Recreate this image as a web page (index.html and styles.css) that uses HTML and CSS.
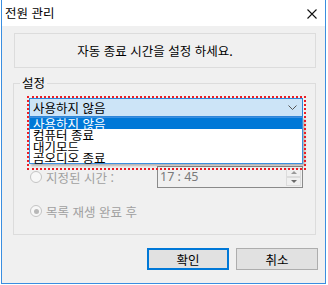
FILE: index.html
```html
<!DOCTYPE html>
<html lang="ko">

<head>
    <meta charset="UTF-8">
    <meta name="viewport" content="width=device-width, initial-scale=1.0">
    <title>전원 관리</title>
    <link rel="stylesheet" href="styles.css">
</head>

<body>

    <div class="window">
        <div class="titlebar">
            <span class="title">전원 관리</span>
            <svg class="close" width="10" height="10" viewBox="0 0 10 10">
                <path d="M0.5 0.5 L9.5 9.5 M9.5 0.5 L0.5 9.5" stroke="#111" stroke-width="1.1" fill="none" />
            </svg>
        </div>

        <div class="content">
            <div class="message">자동 종료 시간을 설정 하세요.</div>

            <div class="group">
                <span class="group-title">설정</span>

                <div class="combo-wrap">
                    <div class="combo">
                        <span>사용하지 않음</span>
                        <svg class="chevron" width="9" height="5" viewBox="0 0 9 5">
                            <path d="M0.5 0.5 L4.5 4.5 L8.5 0.5" stroke="#555" stroke-width="1" fill="none" />
                        </svg>
                    </div>
                    <ul class="dropdown">
                        <li class="selected">사용하지 않음</li>
                        <li>컴퓨터 종료</li>
                        <li>대기모드</li>
                        <li>곰오디오 종료</li>
                    </ul>
                </div>

                <div class="row time-row">
                    <label class="radio"><span class="circle"></span>지정된 시간 :</label>
                    <div class="time-field">
                        <span class="time-text">17 : 45</span>
                        <div class="spin">
                            <span class="spin-btn"><span class="arrow up"></span></span>
                            <span class="spin-btn"><span class="arrow down"></span></span>
                        </div>
                    </div>
                </div>

                <div class="row end-row">
                    <label class="radio"><span class="circle checked"></span>목록 재생 완료 후</label>
                </div>

                <div class="marker"></div>
            </div>

            <div class="buttons">
                <button class="btn default">확인</button>
                <button class="btn">취소</button>
            </div>
        </div>
    </div>

</body>

</html>
```

FILE: styles.css
```css
body {
    margin: 0;
    background: #ffffff;
    font-family: 'Noto Sans CJK KR', 'Noto Sans', sans-serif;
    font-size: 12.5px;
    color: #000000;
}

.window {
    box-sizing: border-box;
    width: 325px;
    height: 284px;
    margin-left: 1px;
    border: 1px solid #3a8ee0;
    border-top: none;
    background: #f0f0f0;
}

.titlebar {
    height: 26px;
    background: #ffffff;
    display: flex;
    align-items: center;
    justify-content: space-between;
    padding: 0 8px 0 3px;
}

.title {
    line-height: 26px;
}

.close {
    margin-top: 1px;
}

.content {
    padding-top: 7px;
}

.message {
    box-sizing: border-box;
    width: 302px;
    height: 35px;
    margin-left: 12px;
    padding-right: 20px;
    border: 1px solid #dcdcdc;
    text-align: center;
    line-height: 33px;
}

.group {
    position: relative;
    box-sizing: border-box;
    width: 303px;
    height: 152px;
    margin: 15px 0 0 11px;
    border: 1px solid #dcdcdc;
    padding: 14px 12px 0 15px;
}

.group-title {
    position: absolute;
    top: -8px;
    left: 6px;
    padding: 0 2px;
    background: #f0f0f0;
    line-height: 14px;
}

.combo-wrap {
    position: relative;
    width: 274px;
}

.combo {
    box-sizing: border-box;
    height: 19px;
    border: 1px solid #2f86d8;
    background: #cce4f7;
    display: flex;
    align-items: center;
    justify-content: space-between;
    padding: 0 5px 0 3px;
}

.dropdown {
    position: absolute;
    top: 100%;
    left: 0;
    right: 0;
    z-index: 2;
    margin: 0;
    padding: 0;
    list-style: none;
    background: #ffffff;
    border: 1px solid #3a8ee0;
    box-shadow: 2px 2px 2px rgba(0, 0, 0, 0.25);
}

.dropdown li {
    height: 11.25px;
    line-height: 11.25px;
    padding-left: 3px;
}

.dropdown li.selected {
    background: #0078d7;
    color: #ffffff;
}

.row {
    display: flex;
    align-items: center;
}

.time-row {
    justify-content: space-between;
    width: 274px;
    height: 22px;
    margin-top: 49px;
}

.end-row {
    height: 14px;
    margin-top: 16px;
}

.radio {
    display: flex;
    align-items: center;
    color: #a0a0a0;
}

.circle {
    box-sizing: border-box;
    width: 12px;
    height: 12px;
    margin: 0 4px 0 1px;
    border: 1px solid #c4c4c4;
    border-radius: 50%;
    background: #f7f7f7;
    display: flex;
    align-items: center;
    justify-content: center;
}

.circle.checked::after {
    content: '';
    width: 5px;
    height: 5px;
    border-radius: 50%;
    background: #b8b8b8;
}

.time-field {
    box-sizing: border-box;
    width: 146px;
    height: 22px;
    border: 1px solid #8a8a8a;
    background: #f0f0f0;
    display: flex;
    justify-content: space-between;
    padding: 1px 1px 0 2px;
}

.time-text {
    font-family: 'Noto Sans', sans-serif;
    color: #7a7a7a;
    font-size: 12.5px;
    line-height: 18px;
}

.spin {
    display: flex;
    flex-direction: column;
    width: 15px;
}

.spin-btn {
    box-sizing: border-box;
    height: 9px;
    border: 1px solid #dcdcdc;
    background: #f0f0f0;
    display: flex;
    align-items: center;
    justify-content: center;
}

.arrow {
    width: 0;
    height: 0;
    border-left: 3px solid transparent;
    border-right: 3px solid transparent;
}

.arrow.up {
    border-bottom: 3px solid #9a9a9a;
}

.arrow.down {
    border-top: 3px solid #6a6a6a;
}

.marker {
    position: absolute;
    left: 13px;
    top: 12px;
    z-index: 3;
    box-sizing: border-box;
    width: 279px;
    height: 74px;
    border: 2px dotted #ec1c24;
}

.buttons {
    display: flex;
    justify-content: flex-end;
    gap: 7px;
    margin: 13px 7px 0 0;
}

.btn {
    box-sizing: border-box;
    width: 82px;
    height: 22px;
    border: 1px solid #adadad;
    background: #e1e1e1;
    font-family: 'Noto Sans CJK KR', sans-serif;
    font-size: 12.5px;
    color: #000000;
    padding: 0;
}

.btn.default {
    border: 2px solid #0078d7;
}
```
